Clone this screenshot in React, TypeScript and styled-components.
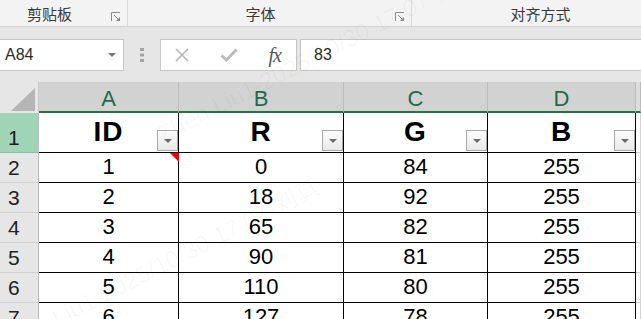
import React from 'react';
import styled, { createGlobalStyle } from 'styled-components';

const GlobalStyle = createGlobalStyle`
  html, body {
    margin: 0;
    padding: 0;
    background: #ffffff;
    overflow: hidden;
  }
  body {
    font-family: "Liberation Sans", "Noto Sans CJK SC", sans-serif;
  }
`;

const COLUMNS = ['A', 'B', 'C', 'D'];
const HEADERS = ['ID', 'R', 'G', 'B'];
const ROWS: number[][] = [
  [1, 0, 84, 255],
  [2, 18, 92, 255],
  [3, 65, 82, 255],
  [4, 90, 81, 255],
  [5, 110, 80, 255],
  [6, 127, 78, 255],
];

const Page = styled.div`
  position: relative;
  width: 641px;
  height: 319px;
  overflow: hidden;
  background: #fff;
`;

/* ribbon group captions */
const Ribbon = styled.div`
  display: grid;
  grid-template-columns: 128px 284px 1fr;
  height: 26px;
  background: #f3f3f3;
  border-bottom: 1px solid #d4d4d4;
`;

const RibbonGroup = styled.div<{ $padL?: number; $padR?: number; $last?: boolean }>`
  position: relative;
  display: flex;
  align-items: center;
  justify-content: center;
  padding-left: ${(p) => p.$padL || 0}px;
  padding-right: ${(p) => p.$padR || 0}px;
  border-right: ${(p) => (p.$last ? 'none' : '1px solid #d9d9d9')};
  font-family: "Noto Sans CJK SC", sans-serif;
  font-size: 15px;
  color: #3a3a3a;
  white-space: nowrap;
`;

const Launcher = styled.svg`
  position: absolute;
  right: 6px;
  top: 12px;
`;

function DialogLauncher() {
  return (
    <Launcher width="10" height="10" viewBox="0 0 10 10">
      <path d="M0.5 9V0.5H9" fill="none" stroke="#8a8a8a" strokeWidth="1" />
      <path d="M3 3L8 8" fill="none" stroke="#8a8a8a" strokeWidth="1" />
      <path d="M9 5V9H5Z" fill="#8a8a8a" />
    </Launcher>
  );
}

/* formula bar */
const FormulaBar = styled.div`
  display: flex;
  align-items: flex-start;
  height: 43px;
  padding-top: 12px;
  background: #e6e6e6;
`;

const Box = styled.div`
  box-sizing: border-box;
  height: 32px;
  display: flex;
  align-items: center;
  background: #fff;
  border: 1px solid #c6c6c6;
  font-size: 16px;
  color: #2b2b2b;
`;

const NameBox = styled(Box)`
  width: 125px;
  margin-left: -1px;
  padding: 0 7px 0 5px;
  justify-content: space-between;
`;

const Grip = styled.div`
  width: 36px;
  height: 32px;
  display: flex;
  align-items: center;
  justify-content: center;
`;

const FuncBox = styled(Box)`
  width: 137px;
  padding: 0 15px 0 13px;
  justify-content: space-between;
`;

const Fx = styled.span`
  font-family: "Liberation Serif", "DejaVu Serif", serif;
  font-style: italic;
  font-size: 20px;
  color: #555;
  letter-spacing: -1px;
`;

const InputBox = styled(Box)`
  flex: 1;
  margin-left: 3px;
  margin-right: -2px;
  padding-left: 13px;
`;

/* sheet */
const Sheet = styled.div`
  display: grid;
  grid-template-columns: 39px 140px 165px 144px 148px 1fr;
  grid-template-rows: 31px 40px repeat(6, 30px);
`;

const Corner = styled.div`
  box-sizing: border-box;
  background: #e6e6e6;
  border-right: 1px solid #c8c8c8;
  border-bottom: 2px solid #e6e6e6;
  display: flex;
  align-items: flex-end;
  justify-content: flex-end;
  padding: 0 3px 0 0;
`;

const ColHead = styled.div<{ $plain?: boolean }>`
  box-sizing: border-box;
  background: ${(p) => (p.$plain ? '#dcdcdc' : '#d2d2d2')};
  border-right: 1px solid #bcbcbc;
  border-bottom: 2px solid #217346;
  display: flex;
  align-items: center;
  justify-content: center;
  padding-top: 5px;
  font-size: 22px;
  color: #1d6b4c;
`;

const RowHead = styled.div<{ $active?: boolean }>`
  box-sizing: border-box;
  background: ${(p) => (p.$active ? '#9fd5b6' : '#e6e6e6')};
  border-right: 1px solid #bcbcbc;
  border-bottom: 1px solid ${(p) => (p.$active ? '#8fbfa2' : '#d0d0d0')};
  display: flex;
  align-items: flex-end;
  padding: 0 0 2px 8px;
  font-size: 21px;
  color: ${(p) => (p.$active ? '#1b1b1b' : '#222')};
`;

const Cell = styled.div<{ $bold?: boolean; $empty?: boolean }>`
  position: relative;
  box-sizing: border-box;
  border-right: 1px solid ${(p) => (p.$empty ? '#d4d4d4' : '#000')};
  border-bottom: 1px solid ${(p) => (p.$empty ? '#d4d4d4' : '#000')};
  display: flex;
  align-items: flex-end;
  justify-content: center;
  padding-bottom: ${(p) => (p.$bold ? '4px' : '2px')};
  font-size: ${(p) => (p.$bold ? '28px' : '22px')};
  font-weight: ${(p) => (p.$bold ? 700 : 400)};
  letter-spacing: ${(p) => (p.$bold ? '1px' : '0')};
  color: #000;
`;

const FilterButton = styled.div`
  position: absolute;
  right: 0;
  bottom: 1px;
  box-sizing: border-box;
  width: 21px;
  height: 21px;
  border: 1px solid #a9a9a9;
  background: linear-gradient(#fbfbfb, #e9e9e9);
  display: flex;
  align-items: center;
  justify-content: center;
`;

const Caret = styled.span<{ $size?: number; $color?: string }>`
  width: 0;
  height: 0;
  border-left: ${(p) => p.$size || 4}px solid transparent;
  border-right: ${(p) => p.$size || 4}px solid transparent;
  border-top: ${(p) => p.$size || 4}px solid ${(p) => p.$color || '#666'};
`;

const CommentMark = styled.span`
  position: absolute;
  top: 0;
  right: -1px;
  width: 0;
  height: 0;
  border-left: 9px solid transparent;
  border-top: 9px solid #ee0000;
`;

const Watermark = styled.div<{ $x: number; $y: number }>`
  position: absolute;
  left: ${(p) => p.$x}px;
  top: ${(p) => p.$y}px;
  transform: rotate(-27deg);
  transform-origin: left top;
  font-family: "Liberation Sans", "Noto Sans CJK SC", sans-serif;
  font-size: 24px;
  color: rgba(0, 0, 0, 0.03);
  white-space: nowrap;
  pointer-events: none;
`;

function Grid() {
  const cells: React.ReactNode[] = [];
  cells.push(
    <Corner key="corner">
      <svg width="24" height="23" viewBox="0 0 24 23">
        <path d="M24 0V23H0Z" fill="#b5b5b5" />
      </svg>
    </Corner>
  );
  COLUMNS.forEach((c) => cells.push(<ColHead key={'h' + c}>{c}</ColHead>));
  cells.push(<ColHead key="hE" $plain />);

  cells.push(
    <RowHead key="r1" $active>
      1
    </RowHead>
  );
  HEADERS.forEach((h, i) =>
    cells.push(
      <Cell key={'t' + i} $bold>
        {h}
        <FilterButton>
          <Caret $size={4} $color="#6b6b6b" />
        </FilterButton>
      </Cell>
    )
  );
  cells.push(<Cell key="tE" $empty />);

  ROWS.forEach((row, r) => {
    cells.push(<RowHead key={'r' + (r + 2)}>{r + 2}</RowHead>);
    row.forEach((v, i) =>
      cells.push(
        <Cell key={r + '-' + i}>
          {v}
          {r === 0 && i === 0 && <CommentMark />}
        </Cell>
      )
    );
    cells.push(<Cell key={r + '-E'} $empty />);
  });

  return <Sheet>{cells}</Sheet>;
}

export default function App() {
  return (
    <Page>
      <GlobalStyle />
      <Ribbon>
        <RibbonGroup $padR={28}>
          剪贴板
          <DialogLauncher />
        </RibbonGroup>
        <RibbonGroup $padR={18}>
          字体
          <DialogLauncher />
        </RibbonGroup>
        <RibbonGroup $padL={28} $last>
          对齐方式
        </RibbonGroup>
      </Ribbon>
      <FormulaBar>
        <NameBox>
          A84
          <Caret $size={4} $color="#777" />
        </NameBox>
        <Grip>
          <svg width="4" height="14" viewBox="0 0 4 14">
            <rect x="0" y="0" width="4" height="3" fill="#a3a3a3" />
            <rect x="0" y="5.5" width="4" height="3" fill="#a3a3a3" />
            <rect x="0" y="11" width="4" height="3" fill="#a3a3a3" />
          </svg>
        </Grip>
        <FuncBox>
          <svg width="16" height="16" viewBox="0 0 16 16">
            <path d="M2 2L14 14M14 2L2 14" stroke="#b5b5b5" strokeWidth="1.6" fill="none" />
          </svg>
          <svg width="18" height="14" viewBox="0 0 18 14">
            <path d="M1.5 7.5L6.5 12L16.5 1.5" stroke="#bcbcbc" strokeWidth="3" fill="none" />
          </svg>
          <Fx>fx</Fx>
        </FuncBox>
        <InputBox>83</InputBox>
      </FormulaBar>
      <Grid />
      <Watermark $x={150} $y={118}>Zhen.Liu1-2025/10/30 17:07-刘真</Watermark>
      <Watermark $x={-10} $y={330}>Zhen.Liu1-2025/10/30 17:07-刘真</Watermark>
    </Page>
  );
}
